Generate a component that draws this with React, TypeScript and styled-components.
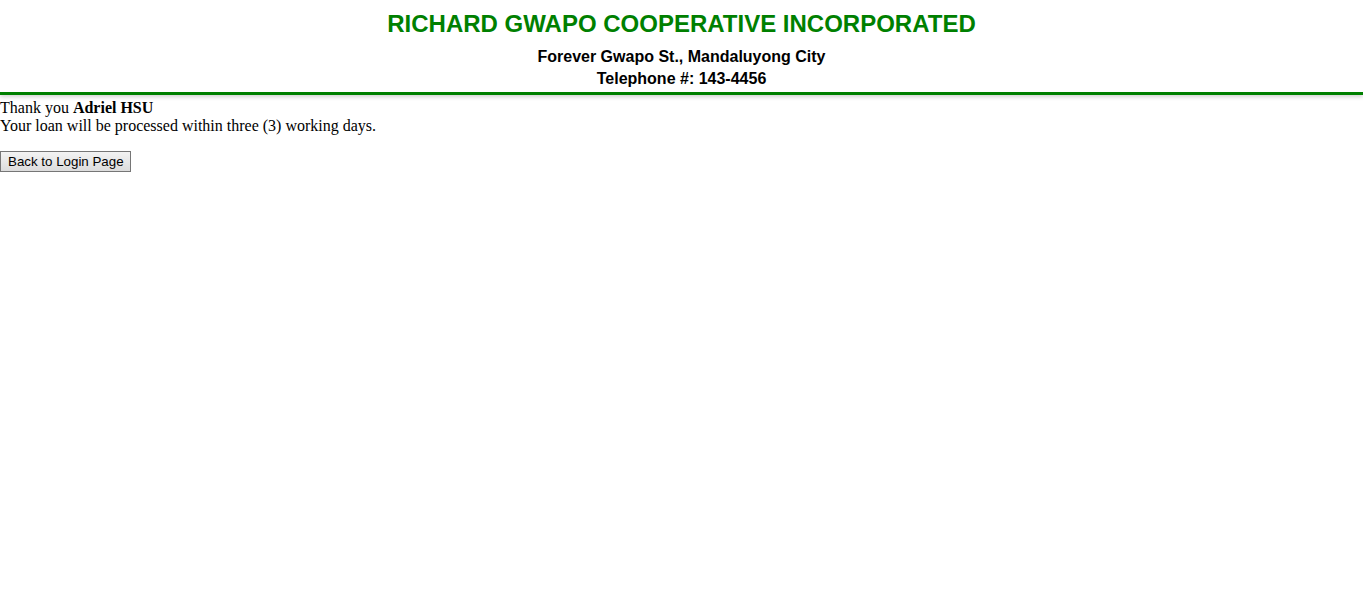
import React from "react";
import styled, { createGlobalStyle } from "styled-components";

const Global = createGlobalStyle`
  html, body { margin: 0; padding: 0; background: #fff; }
  body { font-family: "Liberation Serif", "Times New Roman", serif; font-size: 16px; color: #000; }
`;

const Header = styled.header`
  display: flex;
  flex-direction: column;
  align-items: center;
  padding: 10px 0 2px;
  border-bottom: 3px solid #008000;
  box-shadow: 0 2px 4px rgba(0, 0, 0, 0.18);
  font-family: "Liberation Sans", Arial, sans-serif;
`;

const Title = styled.h1`
  margin: 0 0 8px;
  font-size: 24px;
  font-weight: bold;
  color: #008000;
  line-height: 28px;
`;

const SubLine = styled.div`
  font-size: 16px;
  font-weight: bold;
  line-height: 22px;
  color: #000;
`;

const Content = styled.main`
  padding-top: 4px;
  line-height: 18px;
`;

const Spacer = styled.div`
  height: 16px;
`;

const Button = styled.button`
  font-family: "Liberation Sans", Arial, sans-serif;
  font-size: 13.33px;
  color: #000;
  padding: 1px 6px 1px 7px;
  height: 21px;
  margin: 0;
  border: 1px solid #767676;
  border-radius: 0;
  background: linear-gradient(#f3f3f3, #dcdcdc);
  cursor: pointer;
`;

export default function App() {
  return (
    <>
      <Global />
      <Header>
        <Title>RICHARD GWAPO COOPERATIVE INCORPORATED</Title>
        <SubLine>Forever Gwapo St., Mandaluyong City</SubLine>
        <SubLine>Telephone #: 143-4456</SubLine>
      </Header>
      <Content>
        <div>
          Thank you <b>Adriel HSU</b>
        </div>
        <div>Your loan will be processed within three (3) working days.</div>
        <Spacer />
        <Button>Back to Login Page</Button>
      </Content>
    </>
  );
}
